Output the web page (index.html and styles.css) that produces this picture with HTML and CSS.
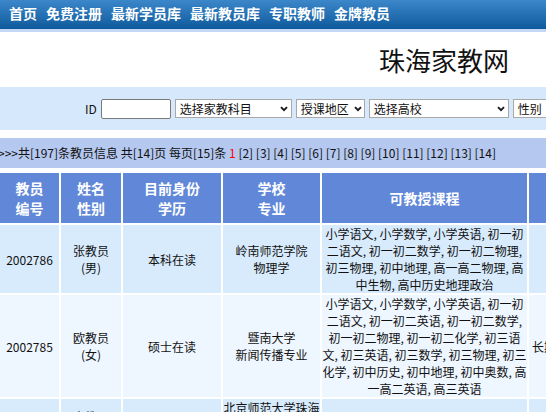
FILE: index.html
```html
<!DOCTYPE html>
<html lang="zh-CN">
<head>
<meta charset="utf-8">
<title>珠海家教网</title>
<link rel="stylesheet" href="styles.css">
</head>
<body>
<div class="page">
  <nav class="nav">
    <a href="#">首页</a>
    <a href="#">免费注册</a>
    <a href="#">最新学员库</a>
    <a href="#">最新教员库</a>
    <a href="#">专职教师</a>
    <a href="#">金牌教员</a>
  </nav>
  <header class="brand">
    <h1 class="title">珠海家教网</h1>
  </header>
  <form class="search">
    <label class="id-label">ID</label>
    <input class="id-input" type="text">
    <div class="sel sel-subject"><span>选择家教科目</span><svg width="8" height="6" viewBox="0 0 8 6"><path d="M1 1.2l3 3 3-3" stroke="#1a1a1a" stroke-width="1.9" fill="none"/></svg></div>
    <div class="sel sel-area"><span>授课地区</span><svg width="8" height="6" viewBox="0 0 8 6"><path d="M1 1.2l3 3 3-3" stroke="#1a1a1a" stroke-width="1.9" fill="none"/></svg></div>
    <div class="sel sel-school"><span>选择高校</span><svg width="8" height="6" viewBox="0 0 8 6"><path d="M1 1.2l3 3 3-3" stroke="#1a1a1a" stroke-width="1.9" fill="none"/></svg></div>
    <div class="sel sel-sex"><span>性别</span><svg width="8" height="6" viewBox="0 0 8 6"><path d="M1 1.2l3 3 3-3" stroke="#1a1a1a" stroke-width="1.9" fill="none"/></svg></div>
  </form>
  <div class="pager">&gt;&gt;&gt;共[197]条教员信息 共[14]页 每页[15]条 <span class="cur">1</span> [2] [3] [4] [5] [6] [7] [8] [9] [10] [11] [12] [13] [14]</div>
  <table class="list">
    <colgroup>
      <col class="c1"><col class="c2"><col class="c3"><col class="c4"><col class="c5"><col class="c6">
    </colgroup>
    <thead>
      <tr>
        <th>教员<br>编号</th>
        <th>姓名<br>性别</th>
        <th>目前身份<br>学历</th>
        <th>学校<br>专业</th>
        <th>可教授课程</th>
        <th>授课区域</th>
      </tr>
    </thead>
    <tbody>
      <tr class="odd">
        <td>2002786</td>
        <td>张教员<br>(男)</td>
        <td>本科在读</td>
        <td>岭南师范学院<br>物理学</td>
        <td class="courses">小学语文, 小学数学, 小学英语, 初一初二语文, 初一初二数学, 初一初二物理, 初三物理, 初中地理, 高一高二物理, 高中生物, 高中历史地理政治</td>
        <td class="area"></td>
      </tr>
      <tr class="even">
        <td>2002785</td>
        <td>欧教员<br>(女)</td>
        <td>硕士在读</td>
        <td>暨南大学<br>新闻传播专业</td>
        <td class="courses">小学语文, 小学数学, 小学英语, 初一初二语文, 初一初二英语, 初一初二数学, 初一初二物理, 初一初二化学, 初三语文, 初三英语, 初三数学, 初三物理, 初三化学, 初中历史, 初中地理, 初中奥数, 高一高二英语, 高三英语</td>
        <td class="area">长期家教香洲区</td>
      </tr>
      <tr class="odd">
        <td>2002784</td>
        <td>李教员<br>(女)</td>
        <td>本科在读</td>
        <td>北京师范大学珠海分校<br>英语</td>
        <td class="courses">小学英语</td>
        <td class="area"></td>
      </tr>
    </tbody>
  </table>
</div>
</body>
</html>
```
FILE: styles.css
```css
html, body {
  margin: 0;
  padding: 0;
  background: #ffffff;
}
body {
  overflow: hidden;
  font-family: "Noto Sans CJK SC", "Noto Sans", sans-serif;
  font-size: 12px;
  color: #111;
}
.page {
  width: 546px;
}
.nav {
  display: flex;
  gap: 9px;
  height: 29px;
  padding-left: 9px;
  background: linear-gradient(#3b87ca, #0e5a9c);
  border-bottom: 3px solid #c4d8f6;
}
.nav a {
  color: #fff;
  text-decoration: none;
  font-weight: bold;
  font-size: 14px;
  line-height: 27px;
  white-space: nowrap;
}
.brand {
  height: 55px;
  display: flex;
  align-items: center;
  justify-content: flex-end;
  padding-right: 37px;
}
.title {
  margin: 0;
  font-size: 26px;
  font-weight: normal;
  color: #111;
}
.search {
  margin: 0 0 8px 0;
  height: 43px;
  background: #d6e8fb;
  display: flex;
  align-items: center;
  gap: 4px;
  padding-left: 85px;
  white-space: nowrap;
  overflow: hidden;
}
.id-label {
  font-size: 12px;
}
.id-input {
  box-sizing: border-box;
  width: 70px;
  height: 20px;
  margin: 0;
  border: 1px solid #7a7a7a;
  border-radius: 2px;
  background: #fff;
  flex: none;
}
.sel {
  box-sizing: border-box;
  height: 19px;
  border: 1px solid #a9a9a9;
  background: #fff;
  display: flex;
  align-items: center;
  justify-content: space-between;
  padding: 0 3px 0 4px;
  flex: none;
  font-size: 12px;
  line-height: 17px;
}
.sel-subject { width: 117px; }
.sel-area { width: 69px; padding-right: 2px; }
.sel-school { width: 140px; }
.sel-sex { width: 60px; }
.pager {
  height: 30px;
  line-height: 30px;
  background: #b5c8ef;
  white-space: nowrap;
  overflow: hidden;
  text-indent: -2px;
  font-size: 12px;
}
.cur {
  color: #f00;
}
.list {
  table-layout: fixed;
  border-collapse: separate;
  border-spacing: 2px;
  width: 663px;
  margin: 3px 0 0 -2px;
}
.c1 { width: 59px; }
.c2 { width: 60px; }
.c3 { width: 98px; }
.c4 { width: 97px; }
.c5 { width: 205px; }
.c6 { width: 130px; }
.list th,
.list td {
  box-sizing: border-box;
  padding: 0;
  text-align: center;
  vertical-align: middle;
}
.list th {
  background: #6188d8;
  color: #fff;
  font-size: 14px;
  font-weight: bold;
  line-height: 20px;
  height: 50px;
  padding: 5px 0;
}
.list td {
  font-size: 12px;
  line-height: 17px;
}
.list .odd td {
  background: #d8ebfc;
}
.list .even td {
  background: #eef6ff;
}
.list td.courses {
  padding: 0;
}
.list td.area {
  text-align: left;
  padding-left: 3px;
}
```
